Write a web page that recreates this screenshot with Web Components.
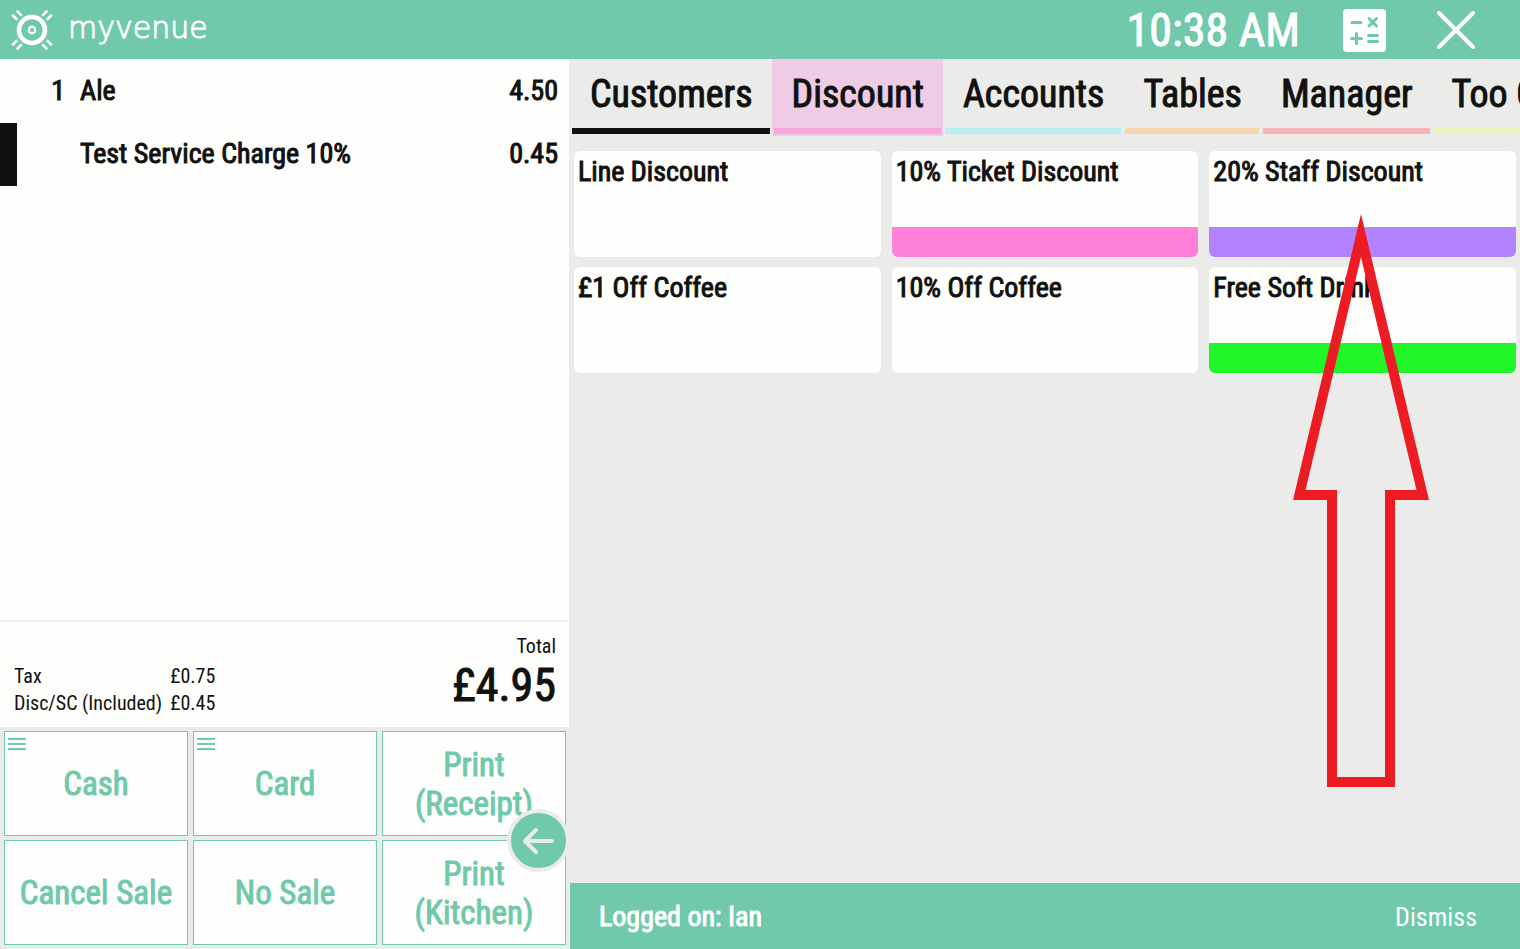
<!DOCTYPE html>
<html lang="en">
<head>
<meta charset="utf-8">
<title>MyVenue POS</title>
<style>
  :root {
    --brand: #6fc9aa;
    --surface: #ebebea;
    --panel: #fefefd;
    --ink: #11110f;
  }
  body {
    margin: 0;
    color: var(--ink);
    background: var(--surface);
    font-family: "Roboto Condensed", "Liberation Sans Narrow", Roboto, sans-serif;
  }
</style>
</head>
<body>
<pos-app></pos-app>

<script>
// small helper: every element gets an open shadow root with its own markup
class PosElement extends HTMLElement {
  connectedCallback() {
    if (this.shadowRoot) return;
    this.attachShadow({ mode: 'open' });
    this.shadowRoot.innerHTML = `
      <style>
        *, *::before, *::after { box-sizing: border-box; }
        button { font: inherit; color: inherit; background: none; border: 0; padding: 0; margin: 0; cursor: pointer; }
        .strong, button.strong { font-weight: 400; -webkit-text-stroke: 1px currentColor; }
      </style>
      ${this.render()}`;
  }
}

// ---------- HEADER ----------
class PosHeader extends PosElement {
  render() {
    return `
      <style>
        :host { display: block; }
        header {
          height: 59px; padding: 0 44px 0 10px;
          display: flex; align-items: center;
          color: #fff; background: var(--brand);
        }
        svg { display: block; }
        .brand { display: flex; align-items: center; gap: 14px; flex: 1; }
        .brand span {
          font: 200 30px/40px "DejaVu Sans", sans-serif;
          -webkit-text-stroke: 1px currentColor;
          padding-bottom: 4px;
        }
        time { font-size: 46px; line-height: 56px; }
        .calc { margin-left: 42px; }
        .close { margin-left: 50px; }
      </style>
      <header>
        <div class="brand">
          <svg width="44" height="42" viewBox="0 0 44 42" fill="none" stroke="#fff" aria-hidden="true">
            <circle cx="22" cy="21" r="13" stroke-width="4.600"/>
            <circle cx="22" cy="21" r="3.300" stroke-width="2.200"/>
            <g stroke-width="2.600" stroke-linecap="round">
              <path d="M3 6.500l3.500 3.500M7.500 2.500l3.500 3.500M41 6.500l-3.500 3.500M36.500 2.500l-3.500 3.500M3 35.500l3.500-3.500M7.500 39.500l3.500-3.500M41 35.500l-3.500-3.500M36.500 39.500l-3.500-3.500"/>
            </g>
          </svg>
          <span>myvenue</span>
        </div>
        <time class="strong">10:38 AM</time>
        <button class="calc" aria-label="Calculator">
          <svg width="44" height="44" viewBox="0 0 44 44">
            <rect x="1" y="1" width="43" height="43" rx="4" fill="#fff"/>
            <g stroke="#6fc9aa" stroke-width="3" stroke-linecap="round">
              <path d="M10 14.500h9M27 10.500l7.500 7.500M34.500 10.500l-7.500 7.500M9.500 30.500h10M14.500 25.500v10M26.500 27.500h9M26.500 33.500h9"/>
            </g>
          </svg>
        </button>
        <button class="close" aria-label="Close">
          <svg width="40" height="40" viewBox="0 0 40 40" stroke="#fff" stroke-width="4" stroke-linecap="round">
            <path d="M3 3l34 34M37 3L3 37"/>
          </svg>
        </button>
      </header>`;
  }
}
customElements.define('pos-header', PosHeader);

// ---------- TICKET ----------
class PosTicket extends PosElement {
  render() {
    const lines = [
      { qty: '1', name: 'Ale', price: '4.50' },
      { qty: '', name: 'Test Service Charge 10%', price: '0.45', selected: true },
    ];
    return `
      <style>
        :host { display: block; padding-top: 1px; background: var(--panel); }
        table { width: 100%; border-collapse: collapse; font-size: 28px; line-height: 32px; }
        tr { height: 63px; }
        td { padding: 0 0 2px; }
        .mark { width: 17px; }
        .selected .mark { background: var(--ink); }
        .qty { width: 48px; text-align: right; }
        .name { padding-left: 15px; }
        .price { padding-right: 11px; text-align: right; }
      </style>
      <table class="strong" aria-label="Ticket">
        ${lines.map((l) => `
          <tr class="${l.selected ? 'selected' : ''}">
            <td class="mark"></td><td class="qty">${l.qty}</td>
            <td class="name">${l.name}</td><td class="price">${l.price}</td>
          </tr>`).join('')}
      </table>`;
  }
}
customElements.define('pos-ticket', PosTicket);

// ---------- TOTALS ----------
class PosTotals extends PosElement {
  render() {
    return `
      <style>
        :host {
          display: flex; justify-content: space-between; align-items: flex-end;
          height: 107px; padding: 0 13px 10px 14px;
          background: var(--panel); border-top: 2px solid #f2f2f1;
          font-size: 20px;
        }
        table { border-collapse: collapse; line-height: 27px; }
        th { font-weight: 400; text-align: left; padding: 0 8px 0 0; }
        td { padding: 0; }
        .total { display: flex; flex-direction: column; align-items: flex-end; line-height: 24px; padding-bottom: 5px; }
        .total strong { font-size: 46px; line-height: 54px; }
      </style>
      <table>
        <tr><th scope="row">Tax</th><td>£0.75</td></tr>
        <tr><th scope="row">Disc/SC (Included)</th><td>£0.45</td></tr>
      </table>
      <div class="total"><span>Total</span><strong class="strong">£4.95</strong></div>`;
  }
}
customElements.define('pos-totals', PosTotals);

// ---------- PAYMENT BUTTON ----------
class PayButton extends PosElement {
  render() {
    const menu = this.hasAttribute('menu') ? `
      <svg width="20" height="14" viewBox="0 0 20 14" stroke="#6fc9aa" stroke-width="2" aria-hidden="true">
        <path d="M1 2h18M1 7h18M1 12h18"/>
      </svg>` : '';
    return `
      <style>
        :host { display: grid; }
        button.strong {
          position: relative; height: 105px; padding: 0 8px;
          font-size: 33px; line-height: 39px; color: var(--brand);
          background: var(--panel); border: 1px solid var(--brand);
        }
        /* split-payment menu marker in the corner */
        svg { position: absolute; left: 2px; top: 5px; }
      </style>
      <button class="strong">${menu}<slot></slot></button>`;
  }
}
customElements.define('pay-button', PayButton);

class PosPayments extends PosElement {
  render() {
    return `
      <style>
        :host {
          position: relative; display: grid;
          grid-template-columns: repeat(3, 1fr);
          gap: 4px 5px; padding: 4px;
          background: var(--surface);
        }
        .back {
          position: absolute; right: 0; bottom: 77px;
          width: 63px; height: 63px; border-radius: 50%;
          display: grid; place-items: center;
          background: var(--brand); border: 4px solid var(--surface);
        }
      </style>
      <pay-button menu>Cash</pay-button>
      <pay-button menu>Card</pay-button>
      <pay-button>Print<br>(Receipt)</pay-button>
      <pay-button>Cancel Sale</pay-button>
      <pay-button>No Sale</pay-button>
      <pay-button>Print<br>(Kitchen)</pay-button>
      <button class="back" aria-label="Back">
        <svg width="32" height="28" viewBox="0 0 32 28" fill="none" stroke="#ebebea" stroke-width="4" stroke-linecap="round" stroke-linejoin="round">
          <path d="M29 14H2M13 3L2 14l11 11"/>
        </svg>
      </button>`;
  }
}
customElements.define('pos-payments', PosPayments);

// ---------- TABS ----------
class PosTabs extends PosElement {
  render() {
    const tabs = [
      ['Customers', '#11110f'],
      ['Discount', '#f7a5da', true],
      ['Accounts', '#b8f0f2'],
      ['Tables', '#f4d8b3'],
      ['Manager', '#f5b6b8'],
      ['Too Good To Go', '#ebf3b8'],
    ];
    return `
      <style>
        :host { display: block; overflow: hidden; }
        nav { display: flex; }
        button.strong {
          flex: none; display: flex; flex-direction: column;
          height: 77px; padding: 0 2px 2px; white-space: nowrap;
          font-size: 38px; line-height: 69px;
        }
        button span { height: 69px; padding: 1px 17px 0 18px; }
        button::after { content: ""; width: 100%; height: 6px; background: var(--line); }
        [aria-current] { background: #efcbe5; }
      </style>
      <nav>
        ${tabs.map(([name, line, on]) => `<button class="strong" style="--line:${line}" ${on ? 'aria-current="page"' : ''}><span>${name}</span></button>`).join('')}
      </nav>`;
  }
}
customElements.define('pos-tabs', PosTabs);

// ---------- DISCOUNT CARDS ----------
class DiscountCard extends PosElement {
  render() {
    return `
      <style>
        :host { display: grid; }
        button.strong {
          display: flex; flex-direction: column; justify-content: space-between;
          height: 106px; overflow: hidden; border-radius: 6px;
          background: var(--panel); text-align: left;
          font-size: 28px; line-height: 42px;
        }
        span { padding: 0 4px; }
        i { width: 100%; height: 30px; background: ${this.getAttribute('accent') || 'transparent'}; }
      </style>
      <button class="strong"><span><slot></slot></span><i></i></button>`;
  }
}
customElements.define('discount-card', DiscountCard);

class PosDiscounts extends PosElement {
  render() {
    return `
      <style>
        :host { display: block; position: relative; }
        .grid {
          display: grid; grid-template-columns: repeat(3, 1fr);
          gap: 10px 11px; padding: 15px 4px;
        }
        /* pointer arrow drawn over the cards */
        .arrow { position: absolute; top: 78px; right: 91px; pointer-events: none; }
      </style>
      <div class="grid">
        <discount-card>Line Discount</discount-card>
        <discount-card accent="#ff80d8">10% Ticket Discount</discount-card>
        <discount-card accent="#b383ff">20% Staff Discount</discount-card>
        <discount-card>£1 Off Coffee</discount-card>
        <discount-card>10% Off Coffee</discount-card>
        <discount-card accent="#20f528">Free Soft Drink</discount-card>
      </div>
      <svg class="arrow" width="136" height="573" viewBox="0 0 136 573" fill="#ed1c24" fill-rule="evenodd" aria-hidden="true">
        <path d="M68 0L136 286H102V573H34V286H0ZM68 43L12.500 276H44V563H92V276H123.500Z"/>
      </svg>`;
  }
}
customElements.define('pos-discounts', PosDiscounts);

// ---------- STATUS BAR ----------
class PosStatus extends PosElement {
  render() {
    return `
      <style>
        :host {
          display: flex; justify-content: space-between; align-items: center;
          height: 66px; padding: 2px 43px 0 29px;
          color: #fff; background: var(--brand);
          font-size: 28px; line-height: 32px;
        }
        .dismiss { font-size: 26px; }
      </style>
      <span class="strong">Logged on: Ian</span>
      <button class="dismiss">Dismiss</button>`;
  }
}
customElements.define('pos-status', PosStatus);

// ---------- APP ----------
class PosApp extends PosElement {
  render() {
    return `
      <style>
        :host { display: flex; flex-direction: column; min-height: 100vh; }
        main { flex: 1; display: grid; grid-template-columns: 3fr 5fr; }
        section { display: flex; flex-direction: column; min-width: 0; }
        pos-ticket, pos-totals { margin-right: 1px; }
        pos-ticket, pos-discounts { flex: 1; }
      </style>
      <pos-header></pos-header>
      <main>
        <section>
          <pos-ticket></pos-ticket>
          <pos-totals></pos-totals>
          <pos-payments></pos-payments>
        </section>
        <section>
          <pos-tabs></pos-tabs>
          <pos-discounts></pos-discounts>
          <pos-status></pos-status>
        </section>
      </main>`;
  }
}
customElements.define('pos-app', PosApp);
</script>
</body>
</html>
